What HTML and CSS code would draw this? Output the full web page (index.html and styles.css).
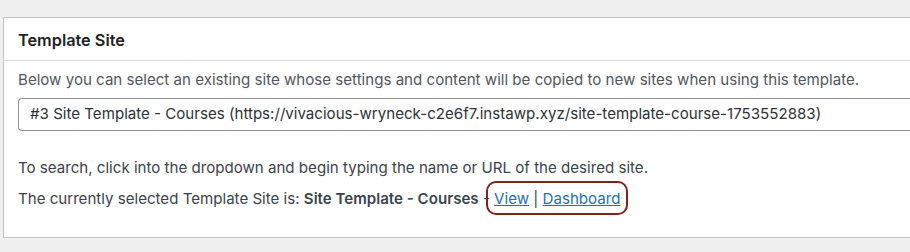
FILE: index.html
```html
<!DOCTYPE html>
<html lang="en">

<head>
  <meta charset="UTF-8" />
  <meta name="viewport" content="width=device-width,initial-scale=1" />
  <title>Template Site</title>
  <link rel="stylesheet" href="styles.css">
</head>

<body>
  <div class="postbox">
    <div class="postbox-header">
      <h2>Template Site</h2>
    </div>
    <div class="inside">
      <p class="desc">Below you can select an existing site whose settings and content will be copied to new sites when using this template.</p>
      <div class="site-select">#3 Site Template - Courses (https://vivacious-wryneck-c2e6f7.instawp.xyz/site-template-course-1753552883)</div>
      <p class="hint">To search, click into the dropdown and begin typing the name or URL of the desired site.</p>
      <p class="current">The currently selected Template Site is: <strong>Site Template - Courses</strong> <span class="links">- <a href="#">View</a> | <a href="#">Dashboard</a></span></p>
    </div>
  </div>
</body>

</html>
```

FILE: styles.css
```css
* {
  box-sizing: border-box;
  margin: 0;
  padding: 0;
}

body {
  font-family: Inter, "Noto Sans", sans-serif;
  font-size: 15.1px;
  line-height: 20px;
  color: #3c434a;
  background: #f0f0f1;
  overflow: hidden;
  padding: 17px 0 0 3px;
}

.postbox {
  width: 907px;
  height: 221px;
  background: #fff;
  border: 1px solid #c3c4c7;
  border-right: 0;
}

.postbox-header {
  height: 43px;
  border-bottom: 1px solid #dcdcde;
  padding: 12px 14px 0;
}

.postbox-header h2 {
  font-size: 16.3px;
  font-weight: 600;
  line-height: 20px;
  color: #1d2327;
}

.inside {
  padding: 9px 0 0 14px;
}

.desc {
  color: #50575e;
}

.site-select {
  margin-top: 8px;
  height: 33px;
  border: 1px solid #8c8f94;
  border-right: 0;
  border-radius: 4px 0 0 4px;
  padding: 5px 11px;
  color: #2c3338;
  white-space: nowrap;
  overflow: hidden;
}

.hint {
  margin-top: 27px;
}

.current {
  margin-top: 11px;
}

.current strong {
  font-weight: 600;
  color: #3c434a;
}

.links {
  position: relative;
}

.links::after {
  content: "";
  position: absolute;
  left: 3px;
  right: -8px;
  top: -8px;
  bottom: -7px;
  border: 2px solid #7b2420;
  border-radius: 10px;
}

.links a {
  color: #2271b1;
}
```
